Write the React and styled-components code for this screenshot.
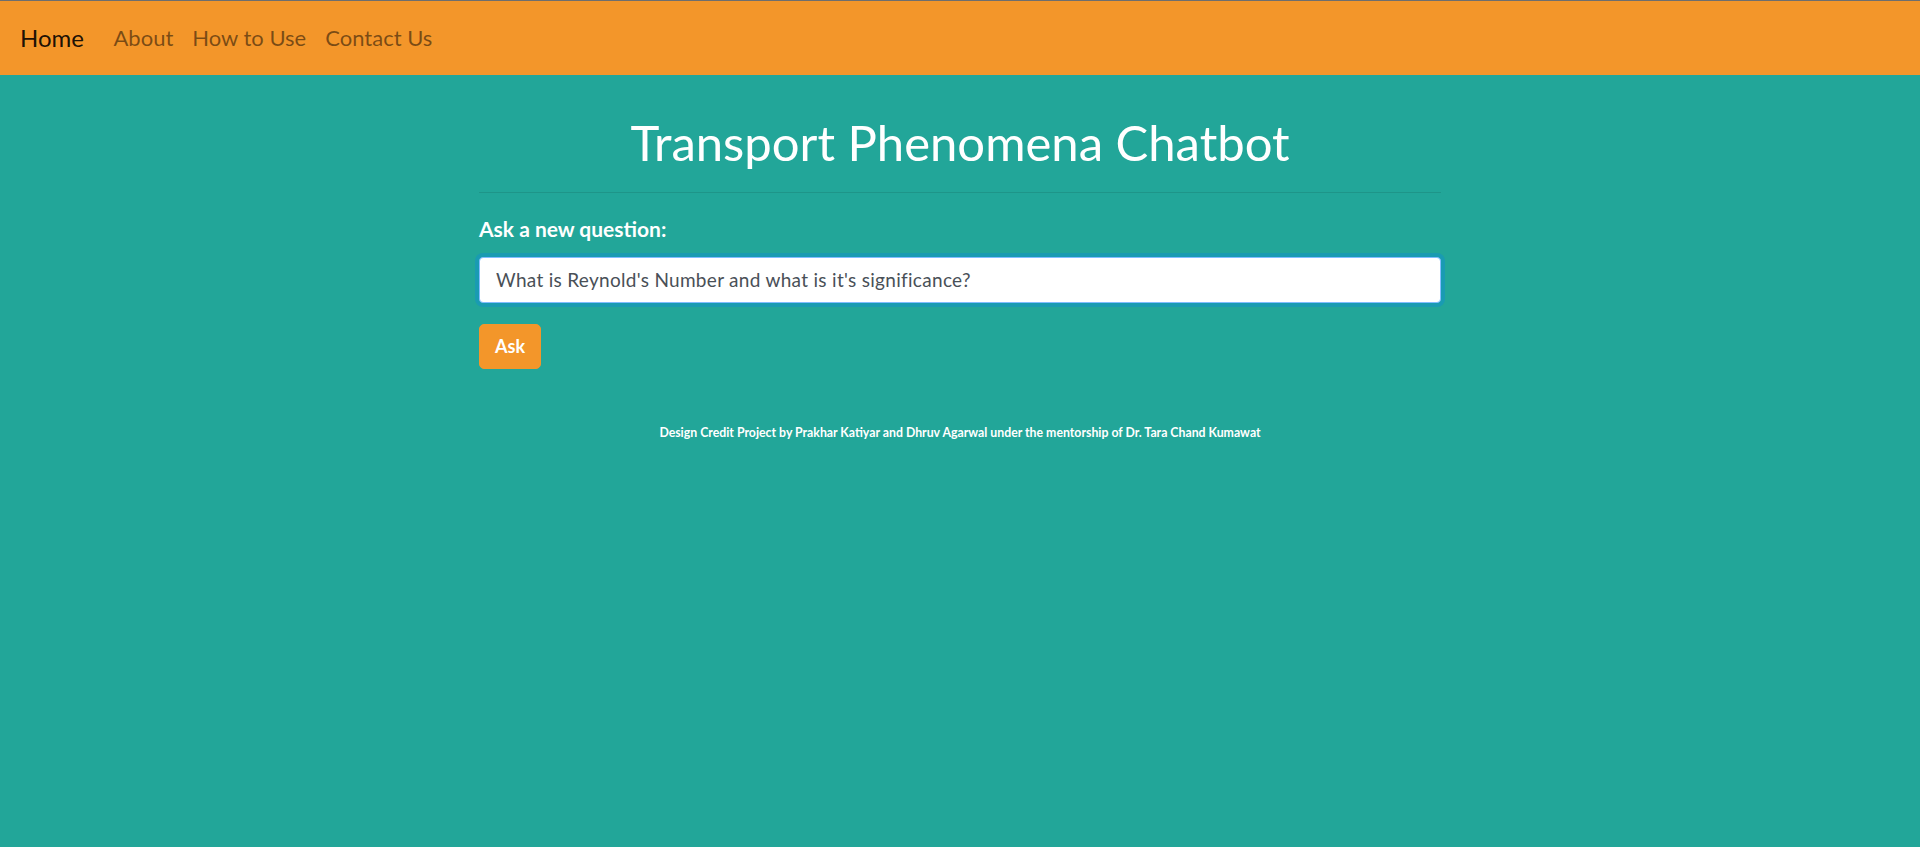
import React from 'react'
import styled, { createGlobalStyle } from 'styled-components'

const GlobalStyle = createGlobalStyle`
  html, body {
    margin: 0;
    padding: 0;
    background: #22a699;
    font-family: Lato, "Open Sans", "Liberation Sans", sans-serif;
  }
  * {
    box-sizing: border-box;
  }
`

const Page = styled.div`
  min-height: 100vh;
  background: #22a699;
`

const Navbar = styled.nav`
  display: flex;
  align-items: center;
  height: 75px;
  padding: 0 0 2px 20px;
  background: #f3962a;
  border-top: 1px solid #6e6e6e;
`

const Brand = styled.a`
  font-size: 24px;
  color: rgba(0, 0, 0, 0.9);
  text-decoration: none;
  margin-right: 20px;
`

const NavLink = styled.a`
  font-size: 22px;
  color: rgba(0, 0, 0, 0.5);
  text-decoration: none;
  padding: 0 9.5px;
`

const Container = styled.main`
  width: 962px;
  margin: 0 auto;
`

const Title = styled.h1`
  margin: 39px 0 0;
  font-size: 49px;
  line-height: 57px;
  font-weight: 400;
  color: #fff;
  text-align: center;
`

const Rule = styled.hr`
  margin: 21px 0 0;
  border: 0;
  border-top: 1px solid rgba(0, 0, 0, 0.1);
`

const Label = styled.label`
  display: block;
  margin-top: 20px;
  font-size: 21px;
  line-height: 1.5;
  font-weight: 700;
  color: #fff;
`

const Input = styled.input`
  display: block;
  width: 100%;
  height: 46px;
  margin-top: 12px;
  padding: 0 16px;
  font-family: inherit;
  font-size: 19px;
  letter-spacing: 0.3px;
  color: #495057;
  background: #fff;
  border: 1px solid #80bdff;
  border-radius: 4px;
  outline: none;
  box-shadow: 0 0 0 4px rgba(0, 123, 255, 0.25);
`

const Button = styled.button`
  display: block;
  margin-top: 21px;
  padding: 8px 15px;
  font-family: inherit;
  font-size: 18px;
  line-height: 1.5;
  font-weight: 700;
  color: #fff;
  background: #f3962a;
  border: 1px solid #f3962a;
  border-radius: 5px;
  cursor: pointer;
`

const Credit = styled.p`
  margin: 54px 0 0;
  font-size: 12.3px;
  line-height: 20px;
  font-weight: 700;
  color: #fff;
  text-align: center;
`

const links = ['About', 'How to Use', 'Contact Us']

const App = () => (
  <Page>
    <GlobalStyle />
    <Navbar>
      <Brand href="#">Home</Brand>
      {links.map(link => (
        <NavLink key={link} href="#">
          {link}
        </NavLink>
      ))}
    </Navbar>

    <Container>
      <Title>Transport Phenomena Chatbot</Title>
      <Rule />
      <Label htmlFor="question">Ask a new question:</Label>
      <Input id="question" defaultValue="What is Reynold's Number and what is it's significance?" />
      <Button type="button">Ask</Button>
      <Credit>
        Design Credit Project by Prakhar Katiyar and Dhruv Agarwal under the mentorship of Dr. Tara Chand Kumawat
      </Credit>
    </Container>
  </Page>
)

export default App
